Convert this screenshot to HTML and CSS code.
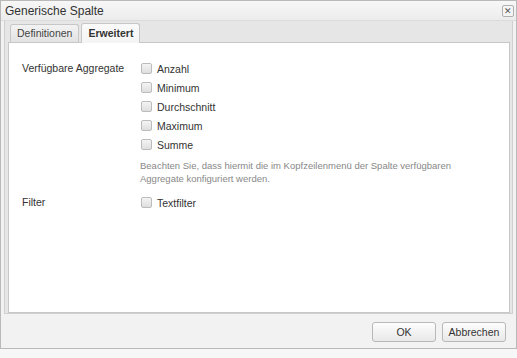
FILE: index.html
```html
<!DOCTYPE html>
<html>
	<head>
		<meta charset="UTF-8">
		<title>Generische Spalte</title>
		<link rel="stylesheet" href="styles.css">
	</head>
	<body>
		<div class="window">
			<div class="titlebar">
				<span class="title">Generische Spalte</span>
				<span class="close">&#x2715;</span>
			</div>
			<div class="tabpanel">
				<div class="tabstrip">
					<div class="tab">Definitionen</div>
					<div class="tab active">Erweitert</div>
				</div>
				<div class="tabbody">
					<!--Aggregate-->
					<div class="row">
						<div class="label">Verfügbare Aggregate</div>
						<div class="field">
							<div class="check"><span class="box"></span>Anzahl</div>
							<div class="check"><span class="box"></span>Minimum</div>
							<div class="check"><span class="box"></span>Durchschnitt</div>
							<div class="check"><span class="box"></span>Maximum</div>
							<div class="check"><span class="box"></span>Summe</div>
							<p class="hint">Beachten Sie, dass hiermit die im Kopfzeilenmenü der Spalte verfügbaren Aggregate konfiguriert werden.</p>
						</div>
					</div>
					<!--Filter-->
					<div class="row">
						<div class="label">Filter</div>
						<div class="field">
							<div class="check"><span class="box"></span>Textfilter</div>
						</div>
					</div>
				</div>
			</div>
			<div class="footer">
				<button class="btn">OK</button>
				<button class="btn">Abbrechen</button>
			</div>
		</div>
	</body>
</html>
```

FILE: styles.css
```css
body{
	margin: 0;
	background: #f7f7f7;
	font-family: "Liberation Sans", Arial, sans-serif;
	font-size: 10.5px;
	color: #333;
}
.window{
	width: 515px;
	height: 347px;
	border: 1px solid #b9b9b9;
	background: #f2f2f2;
}
.titlebar{
	height: 19px;
	display: flex;
	align-items: center;
	justify-content: space-between;
	padding: 0 2px 0 4px;
	background: linear-gradient(#f7f7f7, #ececec);
	border-bottom: 1px solid #dcdcdc;
}
.title{
	font-size: 12px;
	color: #333;
}
.close{
	width: 10px;
	height: 10px;
	border: 1px solid #b0b0b0;
	border-radius: 2px;
	background: #f4f4f4;
	font-size: 9px;
	line-height: 10px;
	text-align: center;
	color: #555;
}
.tabpanel{
	margin: 0 3px;
	border: 1px solid #cfcfcf;
	border-top: none;
	background: #e6e6e6;
	padding: 0 2px 0 3px;
}
.tabstrip{
	height: 21px;
	display: flex;
	align-items: flex-end;
	padding-left: 2px;
	gap: 2px;
}
.tab{
	height: 17px;
	line-height: 17px;
	padding: 0 6px;
	border: 1px solid #c7c7c7;
	border-bottom: none;
	border-radius: 3px 3px 0 0;
	background: linear-gradient(#f3f3f3, #e2e2e2);
	color: #444;
}
.tab.active{
	height: 19px;
	line-height: 19px;
	margin-bottom: -1px;
	background: linear-gradient(#fafafa, #f4f4f4);
	font-weight: bold;
	color: #333;
	position: relative;
}
.tabbody{
	height: 253px;
	border: 1px solid #c7c7c7;
	background: #fff;
	padding: 16px 0 0 13px;
}
.row{
	display: flex;
	margin-bottom: 8px;
}
.label{
	width: 118px;
	line-height: 19px;
}
.field{
	width: 350px;
}
.check{
	height: 19px;
	display: flex;
	align-items: center;
}
.box{
	width: 9px;
	height: 9px;
	margin: 0 5px 0 1px;
	border: 1px solid #bcbcbc;
	border-radius: 2px;
	background: linear-gradient(#f4f4f4, #dedede);
}
.hint{
	margin: 5px 0 0 0;
	color: #888;
	font-size: 9.5px;
	line-height: 13px;
}
.footer{
	height: 34px;
	display: flex;
	justify-content: flex-end;
	align-items: center;
	gap: 6px;
	padding-right: 10px;
}
.btn{
	width: 64px;
	height: 20px;
	margin-top: 2px;
	border: 1px solid #b8b8b8;
	border-radius: 3px;
	background: linear-gradient(#fdfdfd, #e8e8e8);
	font-family: "Liberation Sans", Arial, sans-serif;
	font-size: 10.5px;
	color: #333;
	padding: 0;
}
```
